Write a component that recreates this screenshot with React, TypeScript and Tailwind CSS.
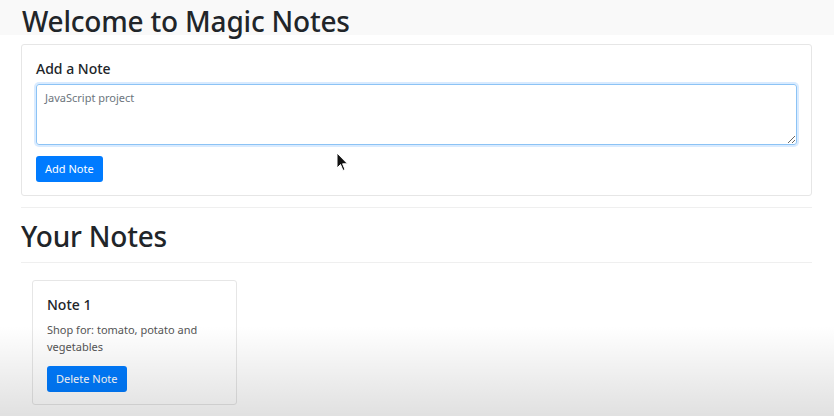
const font = { fontFamily: '"Noto Sans", "Open Sans", sans-serif' }

export default function App() {
    return (
        <div className="relative w-[834px] h-[416px] overflow-hidden bg-white text-[#212529]" style={font}>
            {/* header strip */}
            <div className="h-[35px] bg-[#f9f9f9] px-[22px] pt-[3px]">
                <h1 className="text-[28px] leading-[36px] font-medium tracking-[-0.2px]">Welcome to Magic Notes</h1>
            </div>

            <div className="px-[21px] pr-[22px] pt-[9px]">
                {/* add note card */}
                <div className="border border-[#e6e6e6] rounded-[3px] px-[14px] pt-[14px] pb-[13px]">
                    <h5 className="text-[14px] leading-[20px] font-medium mb-[5px]">Add a Note</h5>
                    <textarea
                        className="block w-full h-[61px] border border-[#8cc3f5] rounded-[3px] px-[8px] py-[5px] text-[11px] leading-[16px] outline-none shadow-[0_0_0_2px_rgba(0,123,255,0.15)] placeholder:text-[#6c757d]"
                        placeholder="JavaScript project"
                    />
                    <button className="mt-[11px] bg-[#007bff] text-white text-[11px] leading-[16px] px-[9px] py-[5px] rounded-[3px]">
                        Add Note
                    </button>
                </div>

                <hr className="mt-[11px] border-[#efefef]" />
                <h1 className="text-[28px] leading-[36px] font-medium tracking-[-0.2px] mt-[10px]">Your Notes</h1>
                <hr className="mt-[8px] border-[#efefef]" />

                {/* notes */}
                <div className="flex gap-4 pt-[17px] pl-[11px]">
                    <div className="w-[205px] border border-[#e6e6e6] rounded-[3px] px-[14px] pt-[14px] pb-[12px]">
                        <h5 className="text-[14px] leading-[20px] font-medium mb-[6px]">Note 1</h5>
                        <p className="text-[11px] leading-[17px] text-[#555]">Shop for: tomato, potato and vegetables</p>
                        <button className="mt-[11px] bg-[#007bff] text-white text-[11px] leading-[16px] px-[9px] py-[5px] rounded-[3px]">
                            Delete Note
                        </button>
                    </div>
                </div>
            </div>

            {/* mouse cursor */}
            <svg className="absolute left-[336px] top-[152px]" width="13" height="20" viewBox="0 0 13 20">
                <path d="M1 1 L1 16 L4.5 12.5 L7 18.5 L9 17.5 L6.6 11.8 L11.5 11.8 Z" fill="#111" stroke="#fff" strokeWidth="1" />
            </svg>

            {/* video fade overlay */}
            <div className="absolute inset-x-0 bottom-0 h-[90px] bg-gradient-to-b from-transparent to-black/[0.12] pointer-events-none" />
        </div>
    )
}
